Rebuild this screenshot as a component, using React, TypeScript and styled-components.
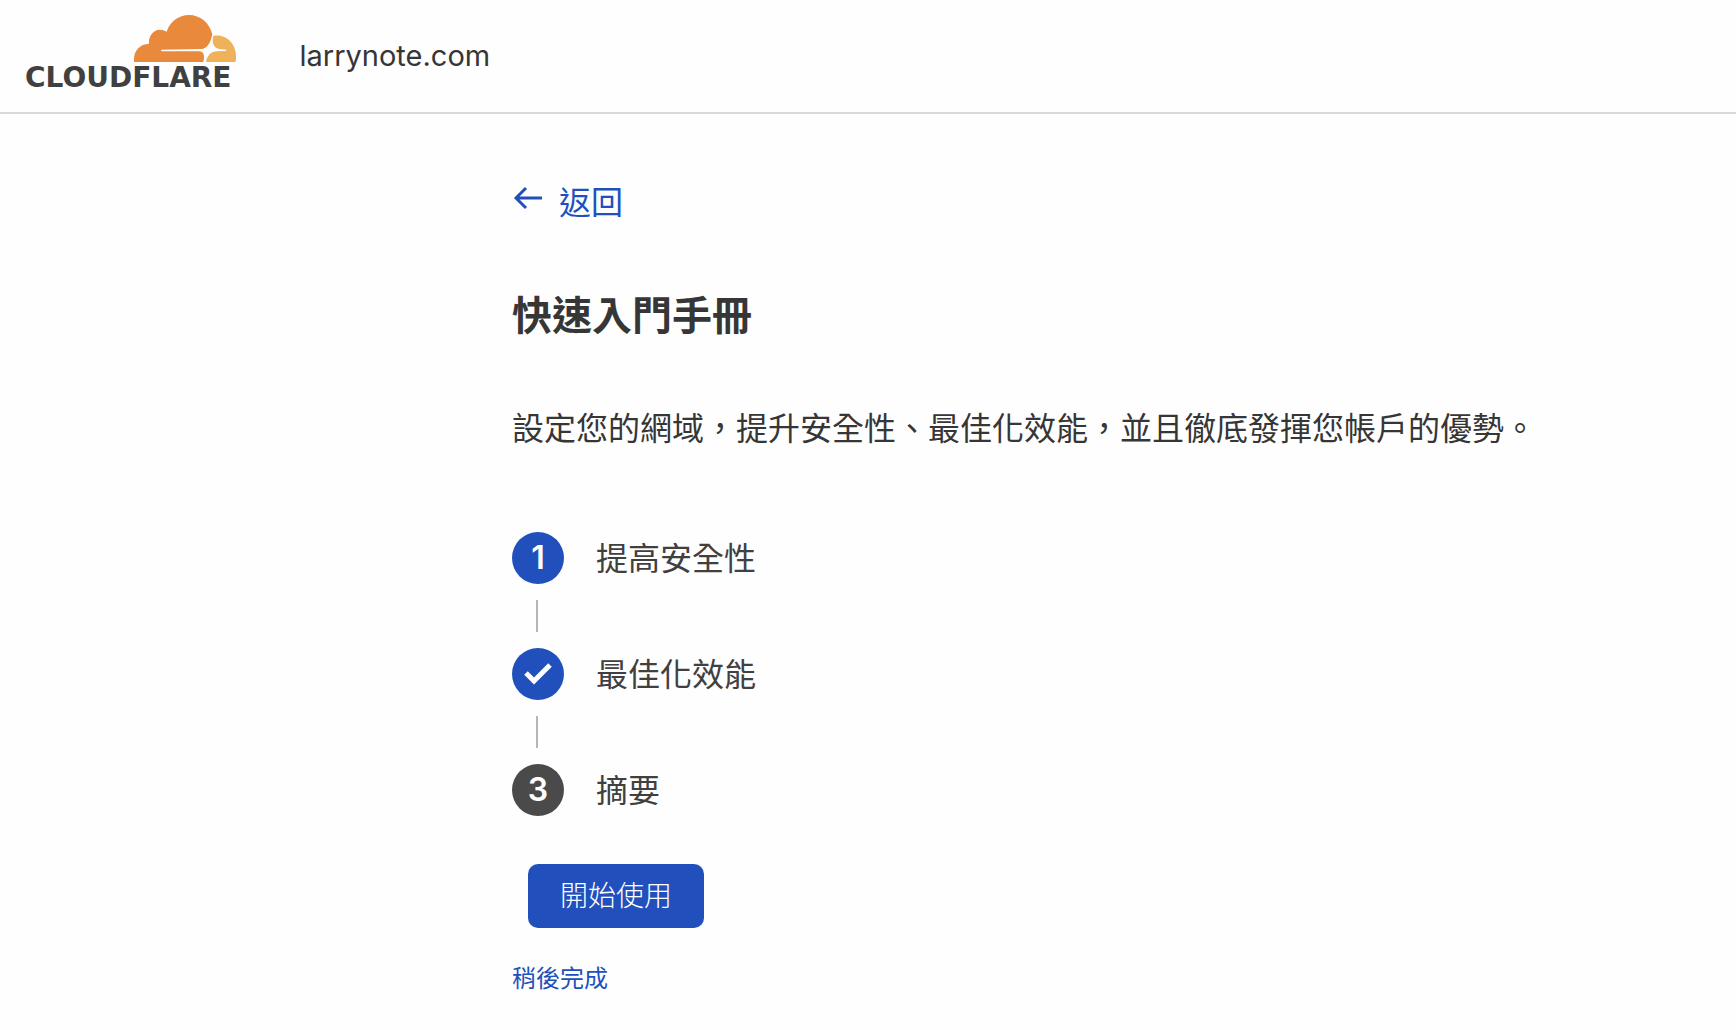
import React from "react";
import styled, { createGlobalStyle } from "styled-components";

const colors = {
  blue: "#2150bd",
  dark: "#4a4a4a",
  ink: "#363636",
  label: "#404041",
  line: "#b6b6b6",
  border: "#d9d9d9",
};

const GlobalStyle = createGlobalStyle`
  *, *::before, *::after {
    box-sizing: border-box;
  }
  body {
    margin: 0;
    background: #fefefe;
    color: ${colors.ink};
    font-family: Inter, "Noto Sans CJK TC", sans-serif;
    font-size: 32px;
    line-height: 48px;
  }
`;

const Header = styled.header`
  display: flex;
  align-items: flex-start;
  gap: 64px;
  min-height: 114px;
  padding: 15px 25px 0;
  border-bottom: 2px solid ${colors.border};
`;

const Brand = styled.a`
  display: flex;
  flex-direction: column;
  align-items: flex-end;
  color: ${colors.label};
  text-decoration: none;
`;

const Cloud = styled.svg`
  display: block;
  width: 102px;
  height: 47px;
`;

const Wordmark = styled.span`
  padding-right: 4px;
  font-family: "DejaVu Sans", sans-serif;
  font-size: 28px;
  font-weight: 700;
  line-height: 32px;
`;

const SiteName = styled.span`
  padding-top: 17px;
  font-size: 29px;
`;

const Main = styled.main`
  padding: 65px 192px 0 512px;
`;

const BackLink = styled.a`
  display: inline-flex;
  align-items: center;
  gap: 15px;
  color: ${colors.blue};
  text-decoration: none;
`;

const BackArrow = styled.svg`
  width: 32px;
  height: 32px;
  margin-bottom: 10px;
`;

const Title = styled.h1`
  margin: 65px 0 64px;
  font-size: 40px;
  font-weight: 700;
  line-height: 48px;
`;

const Intro = styled.p`
  margin: 0 0 78px;
  line-height: 50px;
`;

const Steps = styled.ol`
  margin: 0;
  padding: 0;
  list-style: none;
`;

const Step = styled.li`
  & + &::before {
    content: "";
    display: block;
    width: 2px;
    height: 32px;
    margin: 16px 24px;
    background: ${colors.line};
  }
`;

const StepRow = styled.div`
  display: flex;
  align-items: center;
  gap: 32px;
  color: ${colors.label};
`;

const StepLabel = styled.span`
  padding-top: 2px;
`;

const Badge = styled.span<{ $muted?: boolean }>`
  display: grid;
  place-items: center;
  width: 52px;
  height: 52px;
  border-radius: 50%;
  background: ${(p) => (p.$muted ? colors.dark : colors.blue)};
  color: #fff;
  font-weight: 600;
`;

const Actions = styled.div`
  display: flex;
  flex-direction: column;
  align-items: flex-start;
  gap: 27px;
  margin-top: 48px;
`;

const StartButton = styled.button`
  margin-left: 16px;
  padding: 8px 32px;
  border: 0;
  border-radius: 10px;
  background: ${colors.blue};
  color: #fff;
  font-family: inherit;
  font-size: 28px;
  font-weight: 300;
  line-height: 48px;
  cursor: pointer;
`;

const LaterLink = styled.a`
  color: ${colors.blue};
  font-size: 24px;
  text-decoration: none;
`;

const steps = [
  { label: "提高安全性", badge: "1" },
  { label: "最佳化效能", done: true },
  { label: "摘要", badge: "3", muted: true },
];

function CloudMark() {
  return (
    <Cloud viewBox="402 44 306 141" preserveAspectRatio="none" aria-hidden="true">
      <path
        fill="#e8893c"
        d="M402 185V176C402 150 421 131 447 130C445 106 460 89 479 88C487 88 494 90 500 94C510 64 536 44 567 44C600 44 629 67 637 102C634 116 631 124 627 130C620 141 613 145 601 146L484 148V153H600C611 155 615 166 610 185Z"
      />
      <path
        fill="#f0b15b"
        d="M640 107C675 99 708 128 708 167V178L706 185H618C621 167 632 153 652 153L677 152L679 148L658 146C643 144 634 130 640 107Z"
      />
    </Cloud>
  );
}

export default function App() {
  return (
    <>
      <GlobalStyle />
      <Header>
        <Brand href="#home">
          <CloudMark />
          <Wordmark>CLOUDFLARE</Wordmark>
        </Brand>
        <SiteName>larrynote.com</SiteName>
      </Header>
      <Main>
        <BackLink href="#back">
          <BackArrow viewBox="0 0 32 32" fill="none" stroke="currentColor" strokeWidth="3" aria-hidden="true">
            <path d="M30 16H5M14 6L4 16L14 26" />
          </BackArrow>
          返回
        </BackLink>
        <Title>快速入門手冊</Title>
        <Intro>設定您的網域，提升安全性、最佳化效能，並且徹底發揮您帳戶的優勢。</Intro>
        <Steps>
          {steps.map((step) => (
            <Step key={step.label}>
              <StepRow>
                <Badge $muted={step.muted}>
                  {step.done ? (
                    <svg width="28" height="24" viewBox="0 0 28 24" fill="none" stroke="#fff" strokeWidth="5" aria-hidden="true">
                      <path d="M2 11L10 19L26 3" />
                    </svg>
                  ) : (
                    step.badge
                  )}
                </Badge>
                <StepLabel>{step.label}</StepLabel>
              </StepRow>
            </Step>
          ))}
        </Steps>
        <Actions>
          <StartButton type="button">開始使用</StartButton>
          <LaterLink href="#later">稍後完成</LaterLink>
        </Actions>
      </Main>
    </>
  );
}
